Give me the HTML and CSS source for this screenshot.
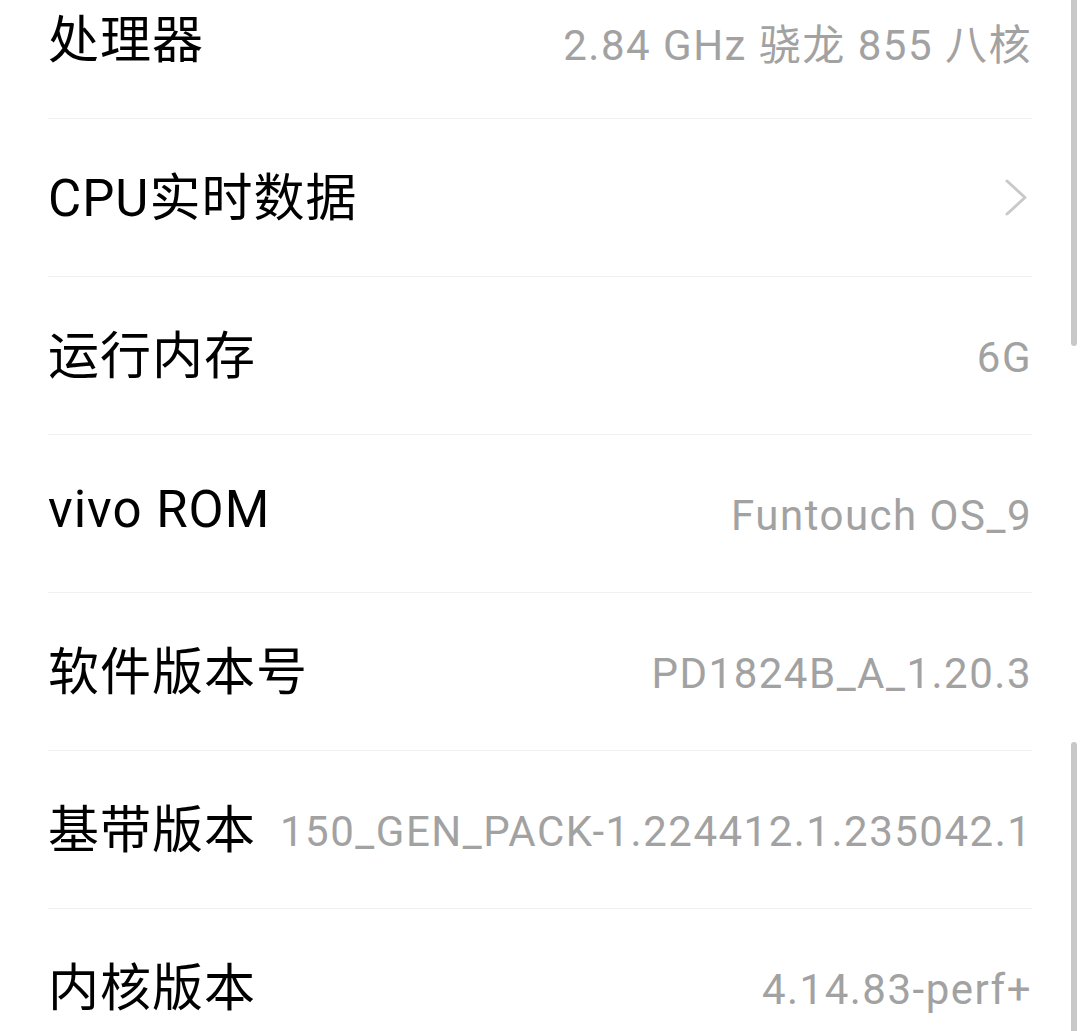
FILE: index.html
```html
<!DOCTYPE html>
<html lang="zh-CN">
<head>
  <meta charset="UTF-8">
  <title>关于手机</title>
  <link rel="stylesheet" href="styles.css">
</head>
<body>
  <!-- Device info list, scrolled so the first row is partly hidden -->
  <div class="info-list">
    <div class="info-row">
      <span class="label">处理器</span>
      <span class="value">2.84 GHz 骁龙 855 八核</span>
    </div>
    <div class="info-row">
      <span class="label">CPU实时数据</span>
      <svg class="chevron" width="24" height="40" viewBox="0 0 24 40">
        <polyline points="3,3 21,19.5 3,36" fill="none" stroke="#c9c9c9" stroke-width="3" stroke-linecap="round" stroke-linejoin="round"/>
      </svg>
    </div>
    <div class="info-row">
      <span class="label">运行内存</span>
      <span class="value">6G</span>
    </div>
    <div class="info-row">
      <span class="label">vivo ROM</span>
      <span class="value">Funtouch OS_9</span>
    </div>
    <div class="info-row">
      <span class="label">软件版本号</span>
      <span class="value">PD1824B_A_1.20.3</span>
    </div>
    <div class="info-row">
      <span class="label">基带版本</span>
      <span class="value">150_GEN_PACK-1.224412.1.235042.1</span>
    </div>
    <div class="info-row">
      <span class="label">内核版本</span>
      <span class="value">4.14.83-perf+</span>
    </div>
  </div>

  <!-- Scroll indicators -->
  <div class="scroll-thumb thumb-top"></div>
  <div class="scroll-thumb thumb-bottom"></div>
</body>
</html>
```

FILE: styles.css
```css
html, body {
  margin: 0;
  height: 100%;
  overflow: hidden;
  background: #fff;
}
body {
  position: relative;
  font-family: Roboto, "Noto Sans CJK SC", sans-serif;
}
.info-list {
  margin-top: -39px;
}
.info-row {
  display: flex;
  align-items: center;
  justify-content: space-between;
  gap: 24px;
  height: 157px;
  margin: 0 48px;
  border-bottom: 1px solid #f0f0f0;
}
.label {
  font-size: 51px;
  color: #000;
  letter-spacing: 1px;
  white-space: nowrap;
  margin-bottom: 8px;
}
.value {
  font-size: 42px;
  color: #a2a2a2;
  letter-spacing: 1.5px;
  white-space: nowrap;
  margin-right: 0;
  margin-top: 4px;
}
.chevron {
  margin-right: 4px;
}
.scroll-thumb {
  position: absolute;
  right: 3px;
  width: 6px;
  background: #c8c8c8;
}
.thumb-top {
  top: 0;
  height: 346px;
  border-radius: 0 0 3px 3px;
}
.thumb-bottom {
  top: 742px;
  bottom: 0;
  border-radius: 3px 3px 0 0;
}
```
